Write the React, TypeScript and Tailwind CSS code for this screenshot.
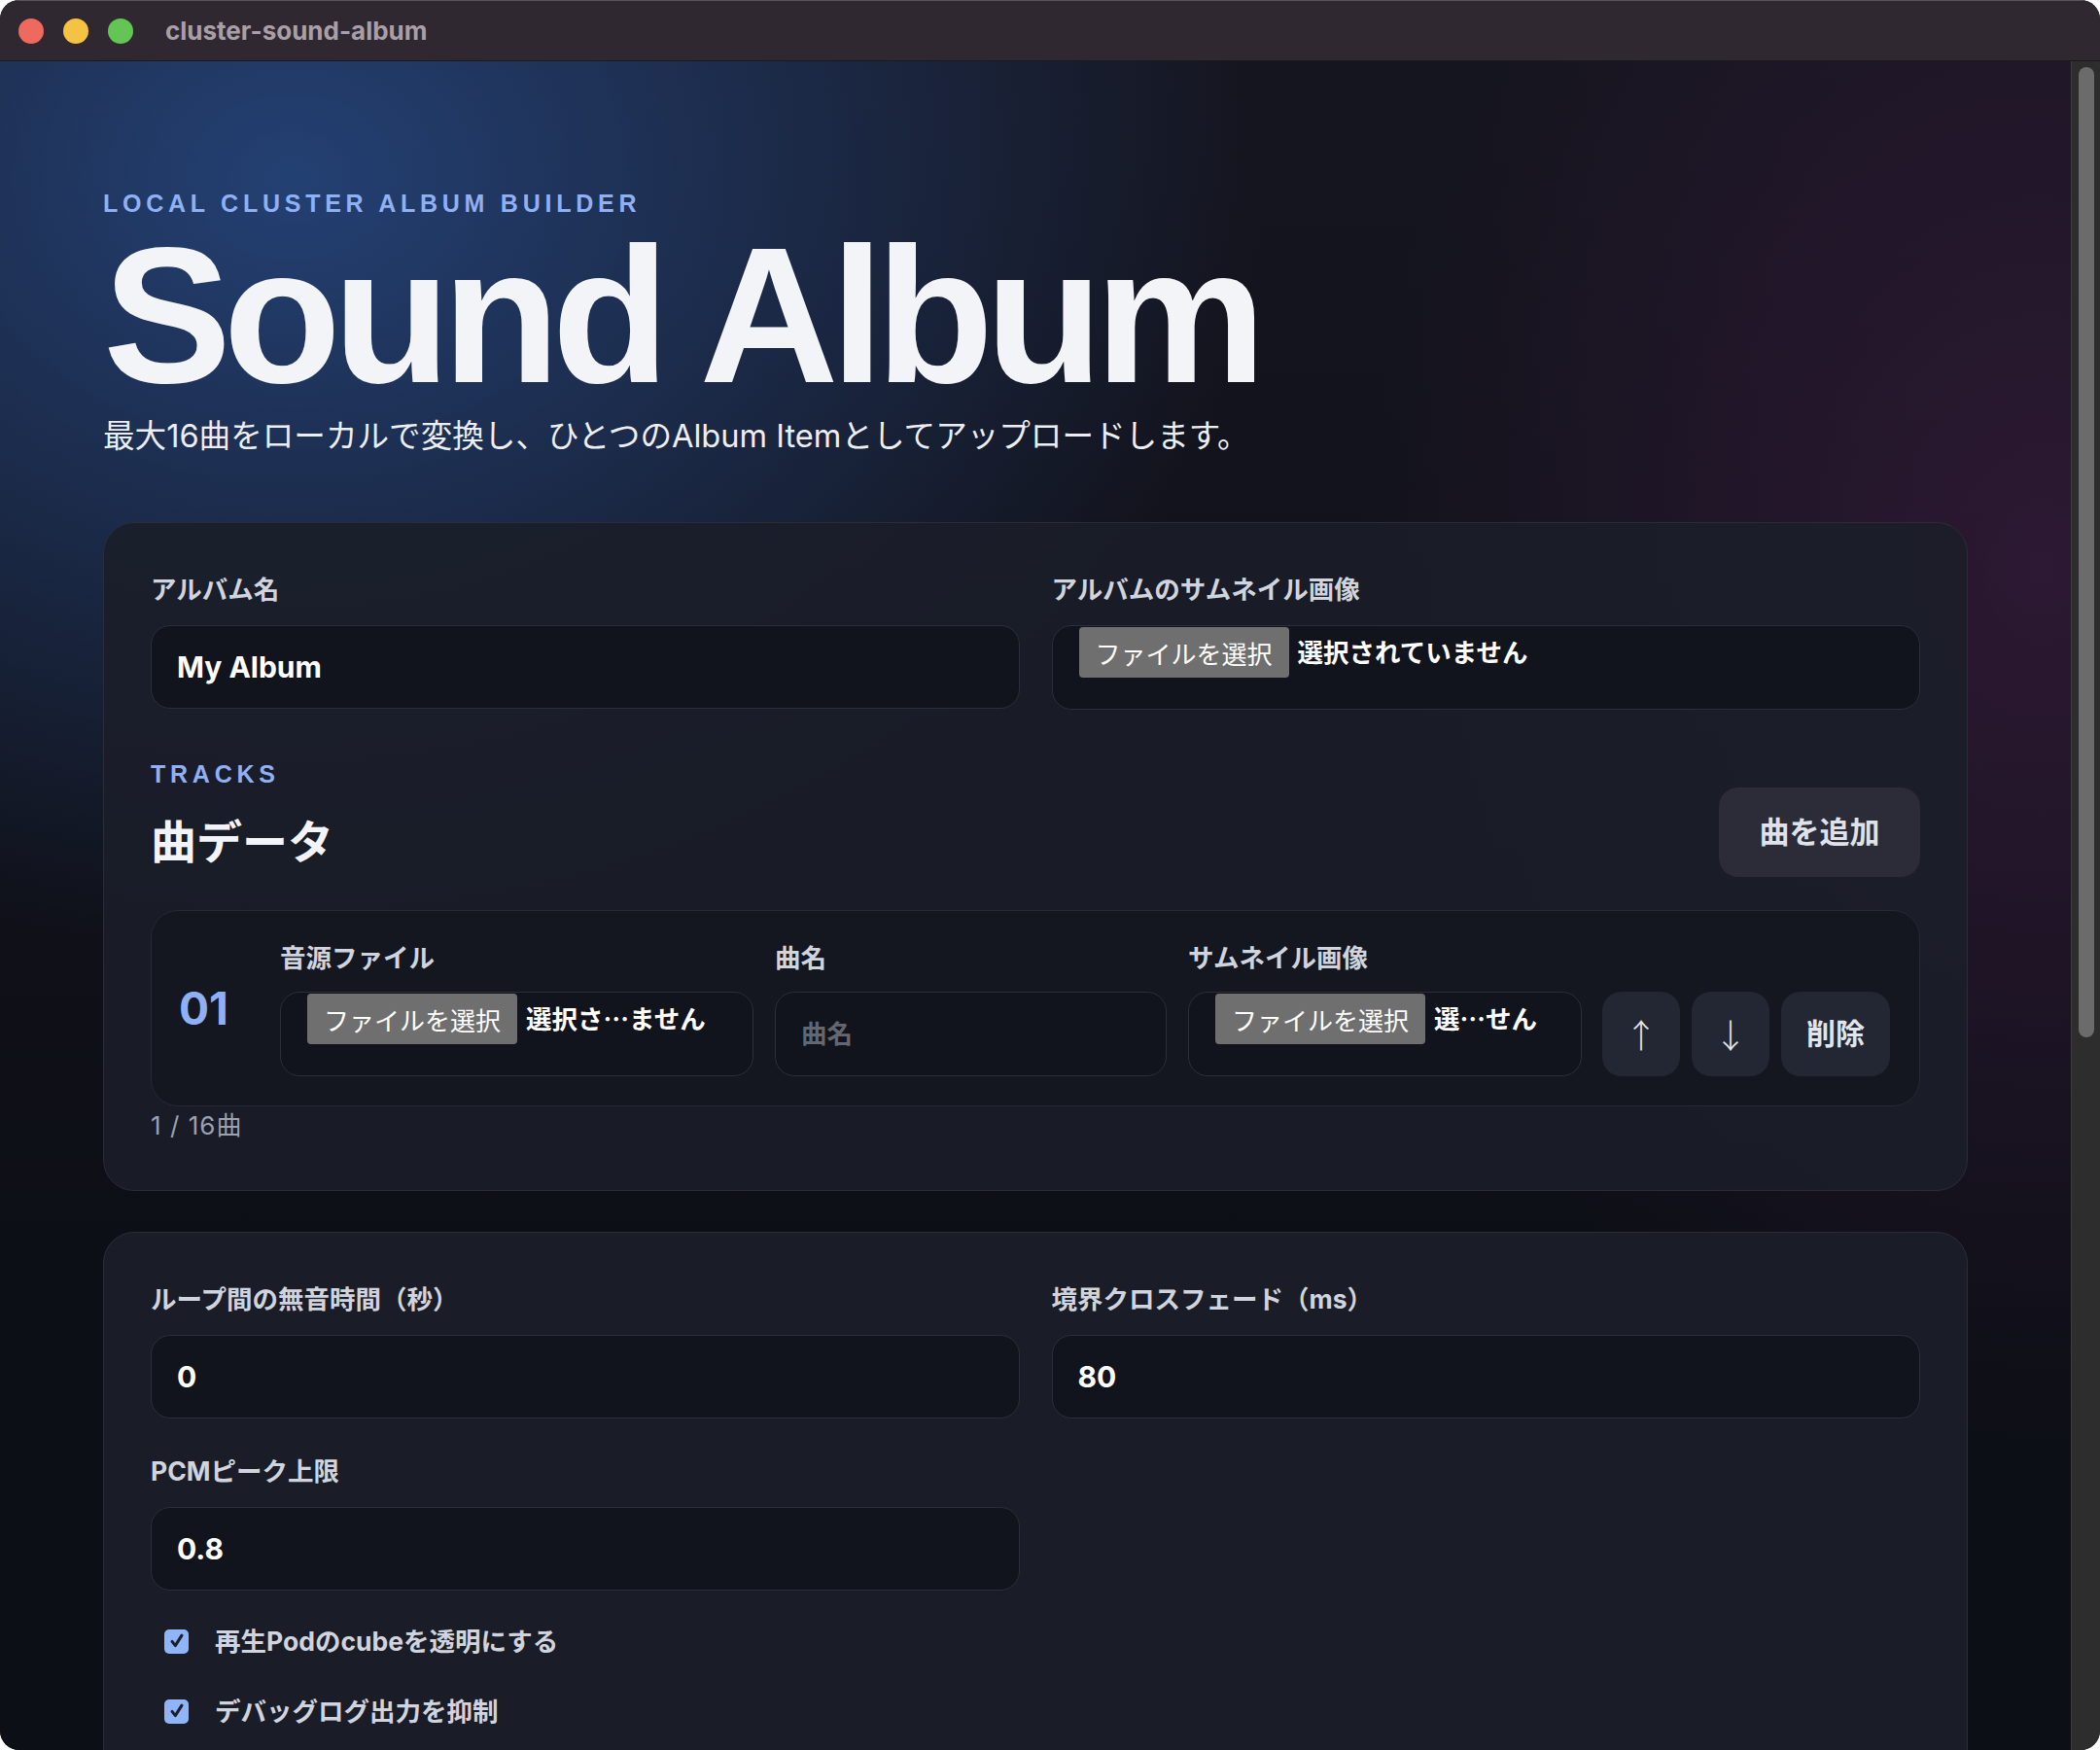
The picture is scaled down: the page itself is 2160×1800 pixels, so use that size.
const labelCls = "text-[26.5px] leading-[36px] font-bold text-[#d0d4de]";
const cjk = "font-['Noto_Sans_CJK_JP',sans-serif]";

function TitleBar() {
  return (
    <div className="flex h-[63px] shrink-0 items-center border-b border-[#1b191c] border-t border-t-[#5b545a] bg-[#302830] pl-[19px]">
      <span className="size-[26px] rounded-full bg-[#ee6a5f]" />
      <span className="ml-[20px] size-[26px] rounded-full bg-[#f5c243]" />
      <span className="ml-[20px] size-[26px] rounded-full bg-[#62c554]" />
      <span className="ml-[33px] text-[26px] font-bold text-[#a99fa9]">cluster-sound-album</span>
    </div>
  );
}

function TextBox({ value, placeholder }: { value?: string; placeholder?: string }) {
  return (
    <div className="flex h-[86px] items-center rounded-[20px] border border-[#2b2f3b] bg-[#11141c] px-[26px]">
      {value ? (
        <span className="text-[30px] font-bold text-white">{value}</span>
      ) : (
        <span className="text-[26.5px] font-bold text-[#63676f]">{placeholder}</span>
      )}
    </div>
  );
}

function FileBox({ status }: { status: string }) {
  return (
    <div className="h-[87px] overflow-hidden rounded-[20px] border border-[#2b2f3b] bg-[#11141c] pl-[27px] pt-[1px]">
      <div className="flex h-[52px] items-center gap-[9px] whitespace-nowrap">
        <span className={`flex h-[52px] items-center rounded-[4px] bg-[#6f6f6f] px-[17px] text-[26px] text-white ${cjk}`}>
          ファイルを選択
        </span>
        <span className={`-mt-[3px] text-[26.5px] font-bold text-white ${cjk}`}>{status}</span>
      </div>
    </div>
  );
}

function Field({ label, children }: { label: string; children: React.ReactNode }) {
  return (
    <div>
      <p className={labelCls}>{label}</p>
      <div className="mt-[19px]">{children}</div>
    </div>
  );
}

function Check({ label }: { label: string }) {
  return (
    <div className="flex items-center">
      <span className="ml-[14px] flex size-[25px] items-center justify-center rounded-[5px] bg-[#8fb4f8]">
        <svg viewBox="0 0 24 24" className="size-[20px]" fill="none" stroke="#1b1f29" strokeWidth="3.6" strokeLinecap="round" strokeLinejoin="round">
          <path d="M6 12.5l4 5L18 5" />
        </svg>
      </span>
      <span className={`ml-[27px] ${labelCls}`}>{label}</span>
    </div>
  );
}

function TrackRow() {
  const btn = "flex h-[87px] items-center justify-center rounded-[20px] bg-[#232733] text-[#e2e5ec]";
  return (
    <div className="mt-[34px] flex rounded-[28px] border border-[#262a36] bg-[#141720] px-[28px] py-[30px]">
      <div className="w-[82px] self-center text-[46px] leading-none font-bold text-[#8fb0f5]">01</div>
      <div className="ml-[22px] w-[487px]">
        <p className={labelCls}>音源ファイル</p>
        <div className="mt-[17px]">
          <FileBox status="選択さ…ません" />
        </div>
      </div>
      <div className="ml-[22px] w-[403px]">
        <p className={labelCls}>曲名</p>
        <div className="mt-[17px] [&>div]:h-[87px]">
          <TextBox placeholder="曲名" />
        </div>
      </div>
      <div className="ml-[22px] w-[405px]">
        <p className={labelCls}>サムネイル画像</p>
        <div className="mt-[17px]">
          <FileBox status="選…せん" />
        </div>
      </div>
      <div className="ml-[21px] flex gap-[12px] self-end">
        <button className={`${btn} w-[80px] text-[34px] font-light ${cjk}`}>↑</button>
        <button className={`${btn} w-[80px] text-[34px] font-light ${cjk}`}>↓</button>
        <button className={`${btn} w-[112px] text-[30px] font-bold`}>削除</button>
      </div>
    </div>
  );
}

export default function App() {
  return (
    <div className="h-[1800px] w-[2160px] overflow-hidden bg-white font-['Inter','Noto_Sans_CJK_JP',sans-serif]">
      <div className="flex h-full flex-col overflow-hidden rounded-[20px] bg-[#0e1017]">
        <TitleBar />
        <div className="flex min-h-0 flex-1">
          <main className="min-w-0 flex-1 overflow-hidden bg-[radial-gradient(ellipse_1000px_800px_at_300px_120px,rgba(38,72,130,0.85),transparent),radial-gradient(ellipse_700px_900px_at_2100px_520px,rgba(62,28,66,0.6),transparent),linear-gradient(180deg,#15151f_0%,#0d0f16_70%)] px-[106px] pt-[131px]">
            <p className="font-['Liberation_Sans',sans-serif] text-[25px] leading-[30px] font-bold tracking-[0.19em] text-[#8fb0f5]">
              LOCAL CLUSTER ALBUM BUILDER
            </p>
            <h1 className="mt-[2px] font-['Liberation_Sans',sans-serif] text-[198px] leading-[198px] font-bold tracking-[-0.042em] text-[#f3f4f8]">
              Sound Album
            </h1>
            <p className="text-[32.6px] leading-[48px] text-[#eceef3]">
              最大16曲をローカルで変換し、ひとつのAlbum Itemとしてアップロードします。
            </p>

            <section className="mt-[65px] rounded-[32px] border border-[#2a2d39] bg-[#1b1e29]/90 px-[48px] pt-[50px] pb-[50px]">
              <div className="grid grid-cols-2 gap-x-[33px]">
                <Field label="アルバム名">
                  <TextBox value="My Album" />
                </Field>
                <Field label="アルバムのサムネイル画像">
                  <FileBox status="選択されていません" />
                </Field>
              </div>

              <div className="mt-[51px] flex items-end justify-between">
                <div>
                  <p className="font-['Liberation_Sans',sans-serif] text-[25px] leading-[30px] font-bold tracking-[0.19em] text-[#8fb0f5]">
                    TRACKS
                  </p>
                  <h2 className="mt-[19px] text-[47px] leading-[72px] font-bold text-[#f3f4f8]">曲データ</h2>
                </div>
                <button className="h-[92px] w-[207px] rounded-[20px] bg-[#2c2c38] text-[31px] font-bold text-[#dfe2ea]">
                  曲を追加
                </button>
              </div>

              <TrackRow />

              <p className="mt-[4px] text-[26px] leading-[32px] tracking-[0.04em] text-[#9ba1ad]">1 / 16曲</p>
            </section>

            <section className="mt-[42px] rounded-[32px] border border-[#2a2d39] bg-[#1a1d27] px-[48px] pt-[50px] pb-[80px]">
              <div className="grid grid-cols-2 gap-x-[33px] gap-y-[36px]">
                <Field label="ループ間の無音時間（秒）">
                  <TextBox value="0" />
                </Field>
                <Field label="境界クロスフェード（ms）">
                  <TextBox value="80" />
                </Field>
                <Field label="PCMピーク上限">
                  <TextBox value="0.8" />
                </Field>
              </div>
              <div className="mt-[34px] flex flex-col gap-[36px]">
                <Check label="再生Podのcubeを透明にする" />
                <Check label="デバッグログ出力を抑制" />
              </div>
            </section>
          </main>
          <div className="w-[30px] shrink-0 border-l border-[#3d3d3d] bg-[#2d2d2d] pt-[6px]">
            <div className="ml-[7px] h-[998px] w-[16px] rounded-full bg-[#6b6b6b]" />
          </div>
        </div>
      </div>
    </div>
  );
}
